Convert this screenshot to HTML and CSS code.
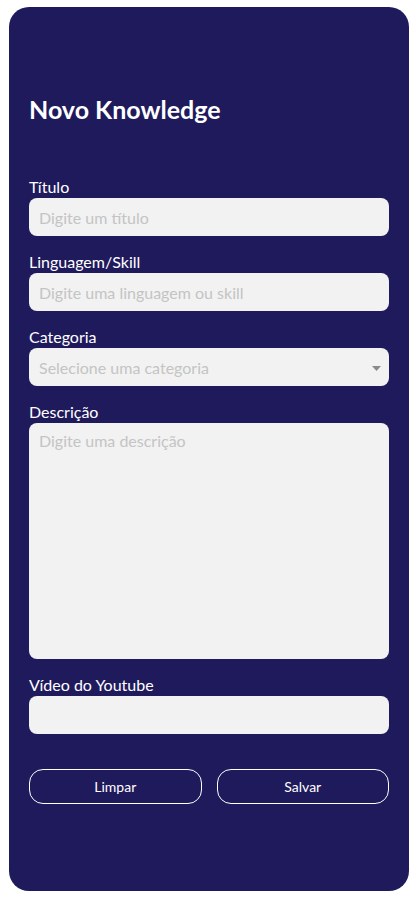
FILE: index.html
```html
<!DOCTYPE html>
<html lang="pt-BR">
<head>
<meta charset="utf-8">
<title>Novo Knowledge</title>
<link rel="stylesheet" href="styles.css">
</head>
<body>
<main class="card">
  <h1 class="title">Novo Knowledge</h1>
  <form class="form">
    <div class="field">
      <label class="label" for="titulo">Título</label>
      <input class="input" id="titulo" type="text" placeholder="Digite um título">
    </div>
    <div class="field">
      <label class="label" for="skill">Linguagem/Skill</label>
      <input class="input" id="skill" type="text" placeholder="Digite uma linguagem ou skill">
    </div>
    <div class="field">
      <label class="label" for="cat">Categoria</label>
      <div class="select">
        <span class="select-text">Selecione uma categoria</span>
        <svg class="caret" width="9" height="5" viewBox="0 0 9 5"><path d="M0 0h9L4.5 5z" fill="#8a8a8a"/></svg>
      </div>
    </div>
    <div class="field">
      <label class="label" for="desc">Descrição</label>
      <textarea class="input textarea" id="desc" placeholder="Digite uma descrição"></textarea>
    </div>
    <div class="field">
      <label class="label" for="yt">Vídeo do Youtube</label>
      <input class="input" id="yt" type="text">
    </div>
    <div class="actions">
      <button class="btn" type="button">Limpar</button>
      <button class="btn" type="button">Salvar</button>
    </div>
  </form>
</main>
</body>
</html>
```
FILE: styles.css
```css
* { box-sizing: border-box; }
html, body { margin: 0; padding: 0; background: #fff; }
body { padding: 7px 9px 8px; font-family: "Lato", "Noto Sans", sans-serif; }
.card {
  background: #1f1a5c;
  border-radius: 20px;
  height: 884px;
  padding: 86px 20px 20px;
  color: #fff;
}
.title {
  margin: 0 0 51px;
  font-size: 25px;
  font-weight: 700;
  line-height: 32px;
}
.form { display: flex; flex-direction: column; gap: 15px; }
.field { display: flex; flex-direction: column; }
.label { font-size: 16px; line-height: 22px; }
.input, .select {
  width: 100%;
  height: 38px;
  border: 0;
  border-radius: 8px;
  background: #f2f2f2;
  padding: 0 10px;
  font-family: inherit;
  font-size: 16px;
  color: #333;
  outline: none;
}
.input::placeholder { color: #c4c4c4; }
.select { display: flex; align-items: center; justify-content: space-between; padding-right: 8px; }
.select-text { color: #c4c4c4; }
.caret { margin-top: 2px; }
.textarea { height: 236px; resize: none; padding: 8px 10px; display: block; }
.actions { display: flex; gap: 15px; margin-top: 20px; }
.btn {
  flex: 1;
  height: 35px;
  border: 1px solid #fff;
  border-radius: 14px;
  background: transparent;
  color: #fff;
  font-family: inherit;
  font-size: 14px;
  font-weight: 400;
}
```
